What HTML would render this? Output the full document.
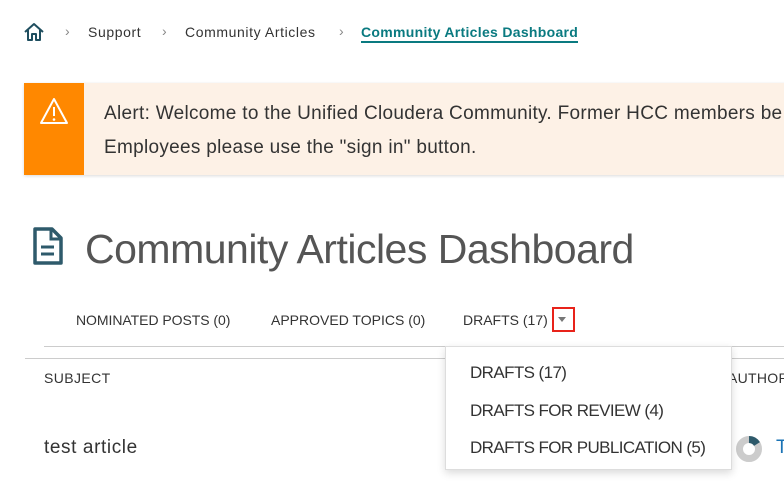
<!DOCTYPE html>
<html><head><style>
*{margin:0;padding:0;box-sizing:border-box}
body{width:784px;height:491px;overflow:hidden;background:#fff;font-family:"Liberation Sans",sans-serif;position:relative;color:#333}
.a{position:absolute;white-space:nowrap}
</style></head><body>
<svg class="a" style="left:23px;top:22px" width="22" height="20" viewBox="0 0 22 20"><path d="M2 10 L11 2 L20 10 M5 8 V18 H9 V12 H13 V18 H17 V8" fill="none" stroke="#1f4e5f" stroke-width="2" stroke-linejoin="round"/></svg>
<div class="a" style="left:65px;top:23px;font-size:14px;color:#888">›</div>
<div class="a" style="left:88px;top:24px;font-size:14px;color:#333;letter-spacing:0.6px">Support</div>
<div class="a" style="left:162px;top:23px;font-size:14px;color:#888">›</div>
<div class="a" style="left:185px;top:24px;font-size:14px;color:#333;letter-spacing:0.6px">Community Articles</div>
<div class="a" style="left:339px;top:23px;font-size:14px;color:#888">›</div>
<div class="a" style="left:361px;top:24px;font-size:14px;color:#0a7a80;font-weight:bold;letter-spacing:0.3px;border-bottom:2px solid #0a7a80;padding-bottom:1px;width:217px">Community Articles Dashboard</div>

<div class="a" style="left:24px;top:83px;width:770px;height:92px;background:#fdf1e6;box-shadow:0 1px 3px rgba(0,0,0,.15)"></div>
<div class="a" style="left:24px;top:83px;width:60px;height:92px;background:#ff8800"></div>
<svg class="a" style="left:39px;top:97px" width="30" height="28" viewBox="0 0 30 28"><path d="M15 2 L28 26 H2 Z" fill="none" stroke="#fff" stroke-width="2" stroke-linejoin="round"/><path d="M15 10 V19" stroke="#fff" stroke-width="2"/><circle cx="15" cy="22.5" r="1.3" fill="#fff"/></svg>
<div class="a" style="left:104px;top:103px;font-size:19px;color:#333;letter-spacing:0.3px">Alert: Welcome to the Unified Cloudera Community. Former HCC members be</div>
<div class="a" style="left:104px;top:137px;font-size:19px;color:#333;letter-spacing:0.3px">Employees please use the "sign in" button.</div>

<svg class="a" style="left:32px;top:226px" width="32" height="40" viewBox="0 0 32 40"><path d="M3 3 H20 L29 12 V37 H3 Z" fill="none" stroke="#2e5a6b" stroke-width="3.5" stroke-linejoin="round"/><path d="M19 3 V13 H29" fill="none" stroke="#2e5a6b" stroke-width="3"/><path d="M9 21 H22 M9 28 H22" stroke="#2e5a6b" stroke-width="3"/></svg>
<div class="a" style="left:85px;top:226px;font-size:41px;color:#555;letter-spacing:-0.5px">Community Articles Dashboard</div>

<div class="a" style="left:76px;top:312px;font-size:14px;color:#333;letter-spacing:-0.05px">NOMINATED POSTS (0)</div>
<div class="a" style="left:271px;top:312px;font-size:14px;color:#333;letter-spacing:0px">APPROVED TOPICS (0)</div>
<div class="a" style="left:463px;top:312px;font-size:14px;color:#333;letter-spacing:0px">DRAFTS (17)</div>
<div class="a" style="left:552px;top:307px;width:23px;height:25px;border:2px solid #e8231a"></div>
<div class="a" style="left:558px;top:317px;width:0;height:0;border-left:4px solid transparent;border-right:4px solid transparent;border-top:5px solid #777"></div>

<div class="a" style="left:44px;top:346px;width:740px;height:1px;background:#ccc"></div>
<div class="a" style="left:25px;top:358px;width:759px;height:1px;background:#ccc"></div>
<div class="a" style="left:44px;top:370px;font-size:14px;color:#333;letter-spacing:0.4px">SUBJECT</div>
<div class="a" style="left:728px;top:370px;font-size:14px;color:#333;letter-spacing:0.3px">AUTHOR</div>
<div class="a" style="left:44px;top:437px;font-size:19px;color:#333;letter-spacing:0.6px">test article</div>
<svg class="a" style="left:736px;top:436px" width="28" height="28" viewBox="0 0 28 28"><circle cx="13" cy="13" r="9.5" fill="none" stroke="#ccc" stroke-width="7"/><path d="M13 3.5 A9.5 9.5 0 0 1 21 8" fill="none" stroke="#2e5a6b" stroke-width="7"/></svg>
<div class="a" style="left:776px;top:437px;font-size:19px;color:#1a73b5">T</div>

<div class="a" style="left:445px;top:346px;width:287px;height:124px;background:#fff;border:1px solid #ddd;box-shadow:0 3px 8px rgba(0,0,0,.15)"></div>
<div class="a" style="left:470px;top:363px;font-size:17px;color:#333;letter-spacing:-0.6px">DRAFTS (17)</div>
<div class="a" style="left:470px;top:401px;font-size:17px;color:#333;letter-spacing:-0.6px">DRAFTS FOR REVIEW (4)</div>
<div class="a" style="left:470px;top:438px;font-size:17px;color:#333;letter-spacing:-0.6px">DRAFTS FOR PUBLICATION (5)</div>
</body></html>
